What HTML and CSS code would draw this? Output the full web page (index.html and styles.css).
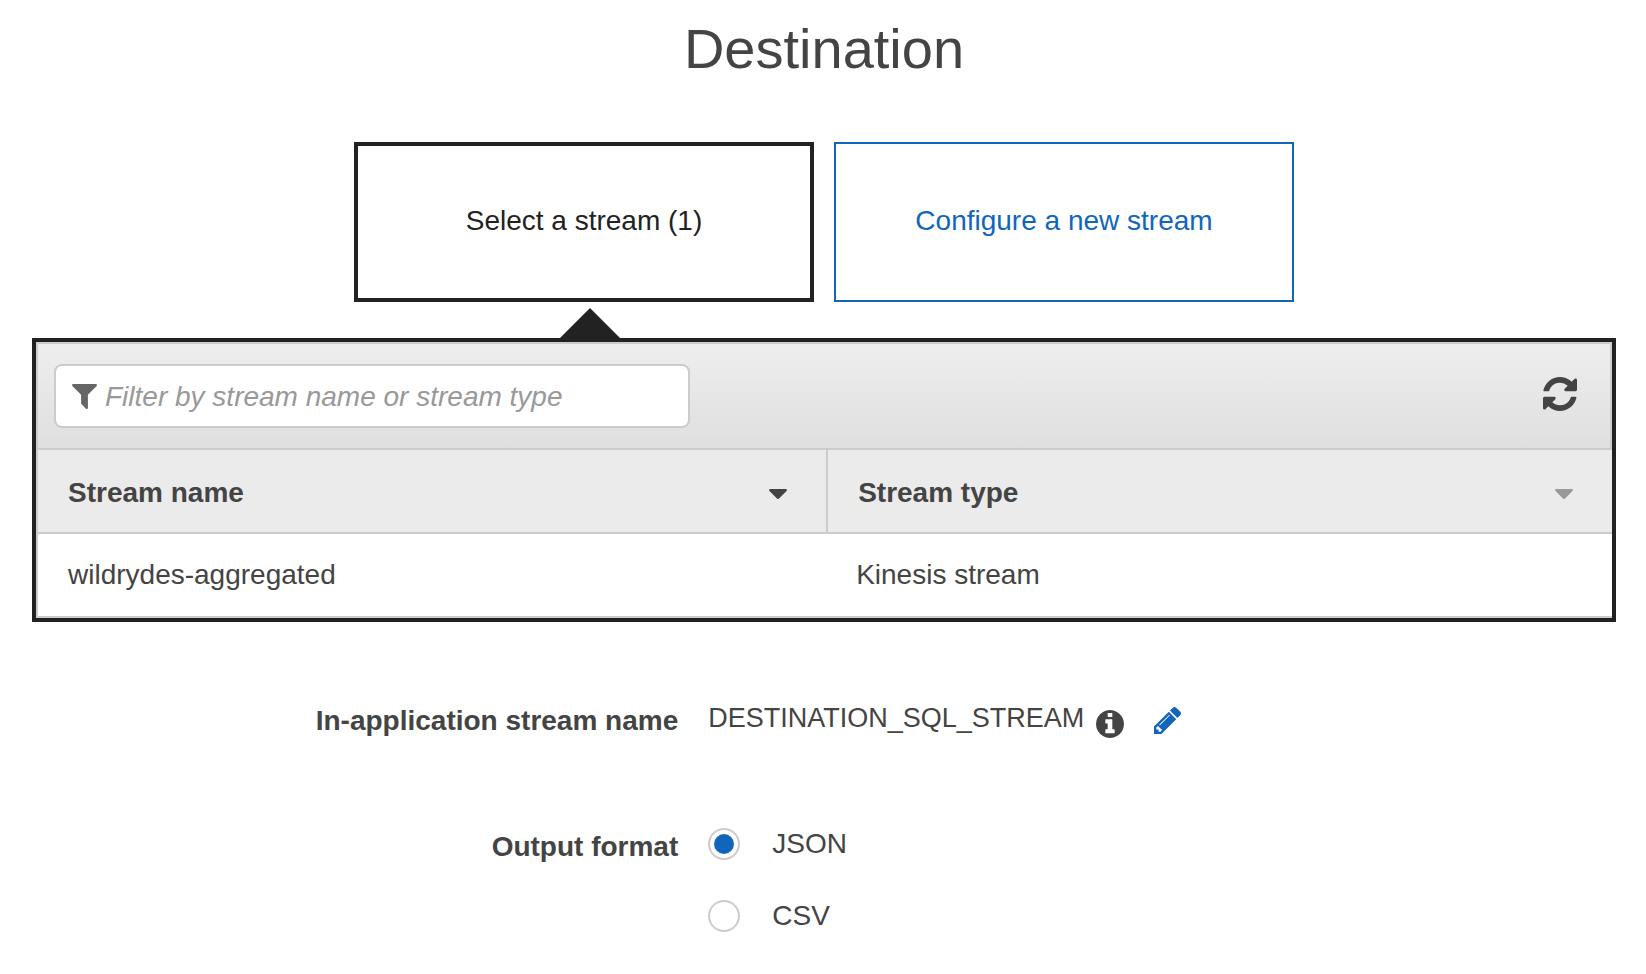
FILE: index.html
```html
<!DOCTYPE html>
<html lang="en">
<head>
<meta charset="utf-8">
<meta name="viewport" content="width=device-width, initial-scale=1">
<title>Destination</title>
<link rel="stylesheet" href="styles.css">
</head>
<body>
<main class="page">
  <h1 class="title">Destination</h1>

  <div class="choices">
    <button type="button" class="choice choice-active" aria-pressed="true">Select a stream (1)</button>
    <button type="button" class="choice" aria-pressed="false">Configure a new stream</button>
  </div>

  <section class="panel" aria-label="Streams">
    <div class="toolbar">
      <div class="search">
        <svg class="search-icon" viewBox="192 256 1408 1408" aria-hidden="true"><path d="M1595 295q17 41-14 70l-493 493v742q0 42-39 59-13 5-25 5-27 0-45-19l-256-256q-19-19-19-45v-486l-493-493q-31-29-14-70 17-39 59-39h1280q42 0 59 39z"/></svg>
        <input class="search-input" type="text" aria-label="Filter streams" placeholder="Filter by stream name or stream type">
      </div>
      <button type="button" class="icon-button refresh" aria-label="Refresh">
        <svg class="refresh-icon" viewBox="128 128 1536 1536" aria-hidden="true"><path d="M1639 1056q0 5-1 7-64 268-268 434.500t-478 166.500q-146 0-282.500-55t-243.500-157l-129 129q-19 19-45 19t-45-19-19-45v-448q0-26 19-45t45-19h448q26 0 45 19t19 45-19 45l-137 137q71 66 161 102t187 36q134 0 250-65t186-179q11-17 53-117 8-23 30-23h192q13 0 22.500 9.500t9.500 22.500zm25-800v448q0 26-19 45t-45 19h-448q-26 0-45-19t-19-45 19-45l138-138q-148-137-349-137-134 0-250 65t-186 179q-11 17-53 117-8 23-30 23h-199q-13 0-22.500-9.500t-9.500-22.500v-7q65-268 270-434.500t480-166.500q146 0 284 55.500t245 156.500l130-129q19-19 45-19t45 19 19 45z"/></svg>
      </button>
    </div>
    <table class="streams">
      <thead>
        <tr>
          <th scope="col" class="name-column">
            <button type="button" class="sort">Stream name
              <svg class="caret" viewBox="384 640 1024 576" aria-hidden="true"><path d="M1408 704q0 26-19 45l-448 448q-19 19-45 19t-45-19l-448-448q-19-19-19-45t19-45 45-19h896q26 0 45 19t19 45z"/></svg>
            </button>
          </th>
          <th scope="col">
            <button type="button" class="sort">Stream type
              <svg class="caret caret-idle" viewBox="384 640 1024 576" aria-hidden="true"><path d="M1408 704q0 26-19 45l-448 448q-19 19-45 19t-45-19l-448-448q-19-19-19-45t19-45 45-19h896q26 0 45 19t19 45z"/></svg>
            </button>
          </th>
        </tr>
      </thead>
      <tbody>
        <tr><td>wildrydes-aggregated</td><td>Kinesis stream</td></tr>
      </tbody>
    </table>
  </section>

  <form class="settings">
    <div class="setting-label" id="stream-label">In-application stream name</div>
    <div class="setting-value" role="group" aria-labelledby="stream-label">
      <span class="stream-value">DESTINATION_SQL_STREAM</span>
      <svg class="info-icon" viewBox="128 128 1536 1536" role="img" aria-label="Information"><path d="M1152 1376v-160q0-14-9-23t-23-9h-96v-512q0-14-9-23t-23-9h-320q-14 0-23 9t-9 23v160q0 14 9 23t23 9h96v320h-96q-14 0-23 9t-9 23v160q0 14 9 23t23 9h448q14 0 23-9t9-23zm-128-896v-160q0-14-9-23t-23-9h-192q-14 0-23 9t-9 23v160q0 14 9 23t23 9h192q14 0 23-9t9-23zm640 416q0 209-103 385.500t-279.500 279.500-385.500 103-385.500-103-279.500-279.500-103-385.500 103-385.500 279.500-279.500 385.500-103 385.500 103 279.500 279.500 103 385.500z"/></svg>
      <button type="button" class="icon-button edit" aria-label="Edit stream name">
        <svg class="edit-icon" viewBox="128 149 1515 1515" aria-hidden="true"><path d="M491 1536l91-91-235-235-91 91v107h128v128h107zm523-928q0-22-22-22-10 0-17 7l-542 542q-7 7-7 17 0 22 22 22 10 0 17-7l542-542q7-7 7-17zm-54-192l416 416-832 832h-416v-416zm683 96q0 53-37 90l-166 166-416-416 166-165q36-38 90-38 53 0 91 38l235 234q37 39 37 91z"/></svg>
      </button>
    </div>

    <div class="setting-label" id="format-label">Output format</div>
    <div class="formats" role="radiogroup" aria-labelledby="format-label">
      <label class="format"><input class="radio" type="radio" name="format" value="json" checked>JSON</label>
      <label class="format"><input class="radio" type="radio" name="format" value="csv">CSV</label>
    </div>
  </form>
</main>
</body>
</html>
```
FILE: styles.css
```css
* {
  box-sizing: border-box;
}

body {
  margin: 0;
  background: #fff;
  color: #444;
  font: 28px/32px "Helvetica Neue", "Liberation Sans", Arial, sans-serif;
}

button,
input {
  font: inherit;
  color: inherit;
}

svg {
  display: block;
  flex: none;
  fill: currentColor;
}

.page {
  padding: 17px 30px 40px 32px;
}

.title {
  margin: 0 0 61px;
  font-size: 56px;
  line-height: 64px;
  font-weight: 400;
  text-align: center;
}

.choices {
  display: flex;
  justify-content: center;
  gap: 20px;
  margin-bottom: 36px;
}

.choice {
  position: relative;
  flex: 0 1 460px;
  min-height: 160px;
  padding: 0 20px 2px;
  border: 2px solid #1166bb;
  background: #fff;
  color: #1166bb;
  cursor: pointer;
}

.choice-active {
  border: 4px solid #222;
  color: #222;
}

/* Pointer that ties the active choice to the panel below it */
.choice-active::after {
  content: "";
  position: absolute;
  top: 162px;
  left: 202px;
  border: 30px solid transparent;
  border-top: 0;
  border-bottom-color: #222;
}

.panel {
  border: 4px solid #222;
}

.toolbar {
  display: flex;
  align-items: center;
  justify-content: space-between;
  padding: 20px 33px 20px 16px;
  border: 2px solid #ccc;
  background: linear-gradient(#eee, #dfdfdf);
}

.search {
  display: flex;
  align-items: center;
  gap: 8px;
  flex: 0 1 636px;
  height: 64px;
  padding: 0 16px;
  border: 2px solid #ccc;
  border-radius: 8px;
  background: #fff;
}

.search-icon {
  width: 25px;
  height: 25px;
  color: #666;
}

.search-input {
  flex: 1;
  min-width: 0;
  padding: 1px 0 0;
  border: 0;
  outline: 0;
  background: transparent;
}

.search-input::placeholder {
  color: #999;
  font-style: italic;
  opacity: 1;
}

.icon-button {
  padding: 0;
  border: 0;
  background: none;
  cursor: pointer;
}

.refresh {
  padding-bottom: 4px;
}

.refresh-icon {
  width: 34px;
  height: 34px;
}

.streams {
  width: 100%;
  table-layout: fixed;
  border-collapse: separate;
  border-spacing: 0;
  border-left: 2px solid #ccc;
}

.streams th {
  padding: 0;
  border-bottom: 2px solid #ccc;
  background: #ebebeb;
}

.streams .name-column {
  width: 50.2%;
  border-right: 2px solid #ccc;
}

.sort {
  display: flex;
  align-items: center;
  justify-content: space-between;
  width: 100%;
  padding: 27px 39px 23px 30px;
  border: 0;
  background: none;
  font-weight: 700;
  cursor: pointer;
}

.caret {
  width: 18px;
  height: 10px;
  margin-top: 2px;
}

.caret-idle {
  color: #999;
}

.streams td {
  padding: 25px 28px;
  border-bottom: 2px solid #ccc;
}

.streams td:first-child {
  padding-left: 30px;
}

.settings {
  display: grid;
  grid-template-columns: 40.8% 1fr;
  gap: 90px 30px;
  margin-top: 80px;
}

.setting-label {
  padding-top: 3px;
  font-weight: 700;
  text-align: right;
}

.setting-value {
  display: flex;
  min-height: 36px;
}

.stream-value {
  font-size: 27px;
}

.info-icon {
  align-self: flex-end;
  width: 28px;
  height: 28px;
  margin: 0 30px 0 12px;
}

.edit {
  align-self: center;
  color: #1166bb;
}

.edit-icon {
  width: 27px;
  height: 27px;
}

.formats {
  display: flex;
  flex-direction: column;
  align-items: flex-start;
  gap: 40px;
}

.format {
  display: flex;
  align-items: center;
  gap: 32px;
}

.radio {
  appearance: none;
  width: 32px;
  height: 32px;
  margin: 0;
  border: 2px solid #ccc;
  border-radius: 50%;
  background: #fff;
}

.radio:checked {
  padding: 4px;
  background: #1166bb content-box;
}
```
